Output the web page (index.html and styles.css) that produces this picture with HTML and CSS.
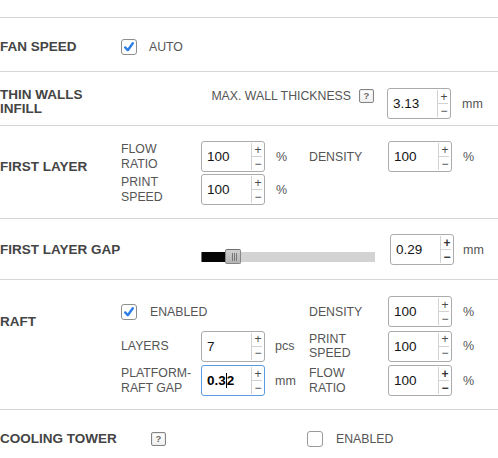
FILE: index.html
```html
<!DOCTYPE html>
<html>
<head>
<meta charset="utf-8">
<link rel="stylesheet" href="styles.css">
</head>
<body>
<div class="panel">
  <div class="sec sec-top"></div>

  <div class="sec sec-fan">
    <div class="title">FAN SPEED</div>
    <div class="check c-2-4">
      <svg class="cb" width="16" height="16" viewBox="0 0 16 16"><rect x="0.5" y="0.5" width="15" height="15" rx="2.5" fill="#fff" stroke="#8e8e8e"/><path d="M4.2 8.4 L6.8 11.2 L11.8 4.3" fill="none" stroke="#2d7ee6" stroke-width="2.4" stroke-linecap="round" stroke-linejoin="round"/></svg>
      <span class="lbl">AUTO</span>
    </div>
  </div>

  <div class="sec sec-thin">
    <div class="title">THIN WALLS<br>INFILL</div>
    <div class="maxwall">
      <span class="lbl">MAX. WALL THICKNESS</span>
      <span class="help">?</span>
    </div>
    <div class="spin c6 nudge-l"><span class="val">3.13</span><span class="btns"><span class="up">+</span><span class="dn">−</span></span></div>
    <div class="unit c7 tight mid">mm</div>
  </div>

  <div class="sec sec-first">
    <div class="title title-first">FIRST LAYER</div>
    <div class="lbl2 c2 r1">FLOW<br>RATIO</div>
    <div class="spin c3 r1"><span class="val">100</span><span class="btns"><span class="up">+</span><span class="dn">−</span></span></div>
    <div class="unit c4 r1">%</div>
    <div class="lbl c5 r1">DENSITY</div>
    <div class="spin c6 r1"><span class="val">100</span><span class="btns"><span class="up">+</span><span class="dn">−</span></span></div>
    <div class="unit c7 r1">%</div>
    <div class="lbl2 c2 r2">PRINT<br>SPEED</div>
    <div class="spin c3 r2"><span class="val">100</span><span class="btns"><span class="up">+</span><span class="dn">−</span></span></div>
    <div class="unit c4 r2">%</div>
  </div>

  <div class="sec sec-gap">
    <div class="title">FIRST LAYER GAP</div>
    <div class="slider">
      <div class="fill"></div>
      <div class="thumb"><i></i><i></i><i></i></div>
      <div class="track"></div>
    </div>
    <div class="spin c6 nudge-r"><span class="val">0.29</span><span class="btns bold"><span class="up">+</span><span class="dn">−</span></span></div>
    <div class="unit c7">mm</div>
  </div>

  <div class="sec sec-raft">
    <div class="title title-raft">RAFT</div>
    <div class="check c-2-4 r1">
      <svg class="cb" width="16" height="16" viewBox="0 0 16 16"><rect x="0.5" y="0.5" width="15" height="15" rx="2.5" fill="#fff" stroke="#8e8e8e"/><path d="M4.2 8.4 L6.8 11.2 L11.8 4.3" fill="none" stroke="#2d7ee6" stroke-width="2.4" stroke-linecap="round" stroke-linejoin="round"/></svg>
      <span class="lbl">ENABLED</span>
    </div>
    <div class="lbl c5 r1">DENSITY</div>
    <div class="spin c6 r1"><span class="val">100</span><span class="btns"><span class="up">+</span><span class="dn">−</span></span></div>
    <div class="unit c7 r1">%</div>

    <div class="lbl c2 r2">LAYERS</div>
    <div class="spin c3 r2"><span class="val">7</span><span class="btns"><span class="up">+</span><span class="dn">−</span></span></div>
    <div class="unit c4 r2 tight">pcs</div>
    <div class="lbl2 c5 r2">PRINT<br>SPEED</div>
    <div class="spin c6 r2"><span class="val">100</span><span class="btns"><span class="up">+</span><span class="dn">−</span></span></div>
    <div class="unit c7 r2">%</div>

    <div class="lbl2 c2 r3">PLATFORM-<br>RAFT GAP</div>
    <div class="spin focus c3 r3"><span class="val strong">0.3<span class="caret"></span>2</span><span class="btns"><span class="up">+</span><span class="dn">−</span></span></div>
    <div class="unit c4 r3 tight">mm</div>
    <div class="lbl2 c5 r3">FLOW<br>RATIO</div>
    <div class="spin c6 r3"><span class="val">100</span><span class="btns bold"><span class="up">+</span><span class="dn">−</span></span></div>
    <div class="unit c7 r3">%</div>
  </div>

  <div class="sec sec-cool">
    <div class="title">COOLING TOWER</div>
    <div class="c2 helpcell"><span class="help">?</span></div>
    <div class="check c-5-8 nudge-l2">
      <svg class="cb" width="16" height="16" viewBox="0 0 16 16"><rect x="0.5" y="0.5" width="15" height="15" rx="2.5" fill="#fff" stroke="#9a9a9a"/></svg>
      <span class="lbl">ENABLED</span>
    </div>
  </div>
</div>
</body>
</html>
```

FILE: styles.css
```css
html, body {
  margin: 0;
  padding: 0;
  background: #fff;
}

body {
  font-family: "Liberation Sans", Arial, sans-serif;
  color: #555;
  width: 498px;
  height: 458px;
  overflow: hidden;
}

.panel {
  width: 498px;
}

.sec {
  box-sizing: border-box;
  display: grid;
  grid-template-columns: 121px 80px 64px 44px 79px 64px 1fr;
  align-items: center;
  border-bottom: 1px solid #d6d6d6;
}

.sec-top { height: 18px; }

.sec-fan {
  height: 54px;
  padding-top: 5px;
}

.sec-thin {
  height: 54px;
  padding-top: 16px;
  align-items: start;
  grid-template-rows: 31px;
}

.sec-first {
  height: 93px;
  padding-top: 15px;
  grid-template-rows: 31px 31px;
  row-gap: 2px;
}

.sec-gap {
  height: 61px;
  padding-top: 15px;
  grid-template-rows: 31px;
}

.sec-raft {
  height: 130px;
  padding-top: 16px;
  grid-template-rows: 31px 31px 31px;
  row-gap: 3.5px;
}

.sec-cool {
  border-bottom: none;
  padding-top: 21px;
  grid-template-rows: 16px;
}

.title {
  grid-column: 1;
  font-weight: bold;
  font-size: 13.5px;
  line-height: 14px;
  color: #444;
  white-space: nowrap;
}

.sec-thin .title {
  align-self: center;
  margin-top: -4px;
}

.title-first {
  grid-row: 1 / 3;
  margin-bottom: 12px;
}

.title-raft {
  grid-row: 1 / 4;
  align-self: start;
  margin-top: 19px;
}

.c2 { grid-column: 2; }
.c3 { grid-column: 3; }
.c4 { grid-column: 4; }
.c5 { grid-column: 5; }
.c6 { grid-column: 6; }
.c7 { grid-column: 7; }
.c-2-4 { grid-column: 2 / 4; }
.c-5-8 { grid-column: 5 / 8; }
.r1 { grid-row: 1; }
.r2 { grid-row: 2; }
.r3 { grid-row: 3; }

.lbl {
  font-size: 12.3px;
  line-height: 16px;
  color: #555;
  white-space: nowrap;
}

.lbl2 {
  font-size: 12.3px;
  line-height: 14.5px;
  color: #555;
  white-space: nowrap;
}

.unit {
  font-size: 12.5px;
  color: #555;
  padding-left: 11px;
}

.unit.tight { padding-left: 10px; }

.unit.mid { align-self: center; }

.check {
  display: flex;
  align-items: center;
  gap: 13px;
}

.sec-fan .check { gap: 12px; }

.cb { display: block; flex: none; }

.nudge-l2 { margin-left: -2px; }

.maxwall {
  grid-column: 2 / 6;
  display: flex;
  align-items: center;
  justify-content: flex-end;
  gap: 8px;
  padding-right: 14px;
  height: 16px;
  align-self: start;
}

.help {
  box-sizing: border-box;
  display: inline-flex;
  align-items: center;
  justify-content: center;
  width: 15px;
  height: 14px;
  border: 1px solid #858585;
  border-radius: 2px;
  box-shadow: inset 0 0 0 1px #ececec;
  background: linear-gradient(#ffffff, #f0f0f0);
  font-size: 9.5px;
  font-weight: bold;
  color: #6a6a6a;
  line-height: 1;
}

.helpcell {
  display: flex;
  align-items: center;
  padding-left: 30px;
}

.spin {
  box-sizing: border-box;
  display: flex;
  width: 64px;
  height: 31px;
  border: 1px solid #ababab;
  border-radius: 3px;
  background: #fff;
}

.sec-thin .spin { align-self: start; }

.nudge-l { margin-left: -1px; }
.nudge-r { margin-left: 2px; }

.spin.focus { border-color: #5b9be3; }

.val {
  flex: 1;
  display: flex;
  align-items: center;
  padding-left: 5px;
  font-size: 13.5px;
  color: #151515;
}

.val.strong {
  font-weight: bold;
  color: #000;
}

.caret {
  display: inline-block;
  width: 1px;
  height: 15px;
  background: #000;
}

.btns {
  width: 12px;
  display: flex;
  flex-direction: column;
  border-left: 1px solid #d2d2d2;
  margin: 1px 0;
}

.up, .dn {
  flex: 1;
  display: flex;
  align-items: center;
  justify-content: center;
  font-size: 12px;
  line-height: 1;
  color: #4a4a4a;
}

.up {
  border-bottom: 1px solid #d2d2d2;
  margin-right: 2px;
  padding-left: 2px;
}

.dn {
  margin-right: 2px;
  padding-left: 2px;
}

.btns.bold .up,
.btns.bold .dn {
  font-weight: bold;
  color: #333;
}

.slider {
  grid-column: 3 / 6;
  align-self: end;
  margin-bottom: 1px;
  width: 174px;
  height: 15px;
  display: flex;
  align-items: center;
}

.fill {
  box-sizing: border-box;
  width: 24px;
  height: 10px;
  background: #050505;
  border-left: 1px solid #777;
}

.thumb {
  box-sizing: border-box;
  width: 16px;
  height: 15px;
  border: 1px solid #858585;
  border-top-color: #6f6f6f;
  border-radius: 2px;
  background: linear-gradient(#cfcfcf, #b4b4b4);
  display: flex;
  align-items: center;
  justify-content: center;
  gap: 1px;
  padding-left: 3px;
}

.thumb i {
  display: block;
  width: 1px;
  height: 8px;
  background: #7a7a7a;
}

.track {
  flex: 1;
  height: 10px;
  background: #d3d3d3;
}
```
